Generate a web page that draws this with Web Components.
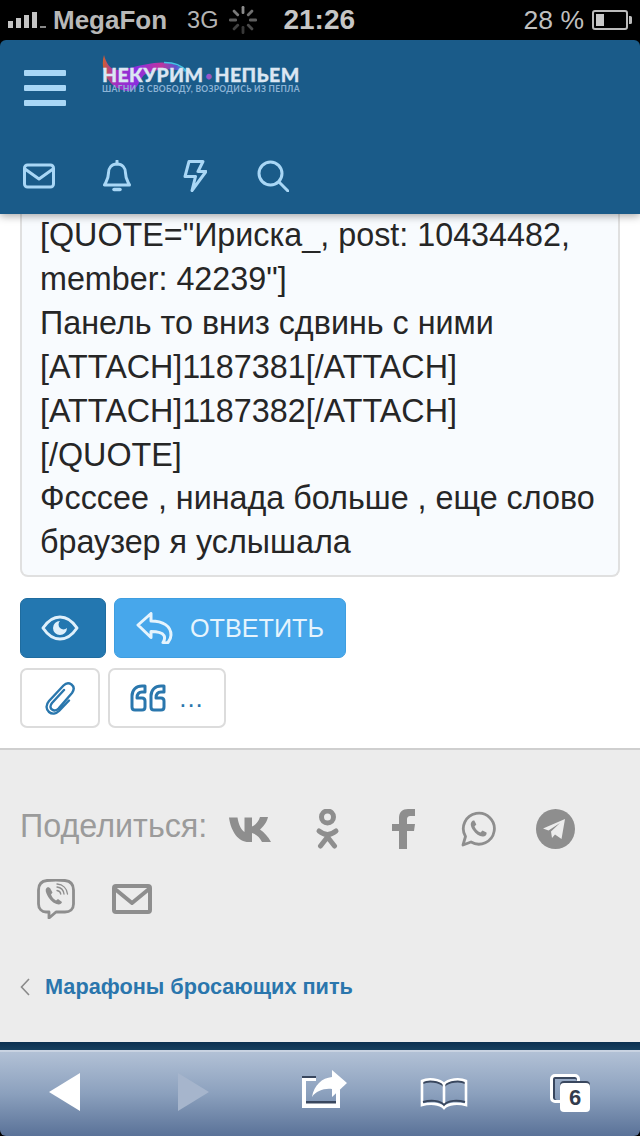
<!DOCTYPE html>
<html lang="ru">
<head>
<meta charset="utf-8">
<title>Некурим</title>
<style>
html, body { margin: 0; padding: 0; background: #000; }
body { width: 640px; height: 1136px; overflow: hidden; font-family: "Liberation Sans", Arial, sans-serif; display: flex; flex-direction: column; }
</style>
</head>
<body>
<ios-status></ios-status>
<site-header></site-header>
<post-area>
    <quote-box>[QUOTE="Ириска_, post: 10434482,<br>member: 42239"]<br>Панель то вниз сдвинь с ними<br>[ATTACH]1187381[/ATTACH]<br>[ATTACH]1187382[/ATTACH]<br>[/QUOTE]<br>Фсссее , нинада больше , еще слово<br>браузер я услышала</quote-box>
    <post-actions></post-actions>
</post-area>
<page-footer>
    <share-row></share-row>
    <back-link>Марафоны бросающих пить</back-link>
</page-footer>
<safari-bar></safari-bar>

<script>
// status bar
customElements.define('ios-status', class extends HTMLElement{
    connectedCallback(){
        this.attachShadow({mode: 'open'});
        let spokes = '';
        for(let i = 0; i < 8; i++){
            let o = [.75, .6, .5, .4, .3, .35, .5, .65][i];
            spokes += `<rect x="12.6" y="0" width="2.8" height="8" rx="1.2" fill="#bbb" opacity="${o}" transform="rotate(${i * 45} 14 14)"/>`;
        }
        this.shadowRoot.innerHTML = `
        <style>
        :host { display: flex; flex: none; height: 40px; background: #000; color: #c9c9c9; align-items: center; font-family: "Liberation Sans", Arial, sans-serif; }
        svg { flex: none; display: block; }
        .signal { margin-left: 8px; }
        .carrier { margin-left: 7px; font-size: 26px; font-weight: 700; color: #b8b8b8; }
        .net { margin-left: 20px; font-size: 23.5px; color: #b4b4b4; }
        .spin { margin-left: 11px; }
        .time { margin-left: 26px; font-size: 28px; font-weight: 700; color: #c6c6c6; }
        .pct { margin-left: auto; font-size: 26.500px; color: #bfbfbf; }
        .batt { margin: 0 8px 0 8px; }
        </style>
        <svg class="signal" width="38" height="16" viewBox="0 0 38 16">
            <rect x="0" y="9" width="5" height="7" fill="#c4c4c4"/>
            <rect x="8" y="6" width="5" height="10" fill="#c4c4c4"/>
            <rect x="16" y="3" width="5" height="13" fill="#c4c4c4"/>
            <rect x="24" y="0" width="5" height="16" fill="#c4c4c4"/>
            <rect x="32" y="14" width="6" height="2" fill="#888"/>
        </svg>
        <span class="carrier">MegaFon</span>
        <span class="net">3G</span>
        <svg class="spin" width="28" height="28" viewBox="0 0 28 28">${spokes}</svg>
        <span class="time">21:26</span>
        <span class="pct">28 %</span>
        <svg class="batt" width="40" height="20" viewBox="0 0 40 20">
            <rect x="1" y="1" width="34" height="18" rx="2" fill="none" stroke="#bbb" stroke-width="2"/>
            <rect x="4" y="4" width="8" height="12" fill="#c8c8c8"/>
            <path d="M37 6h1.5a1.5 1.5 0 0 1 1.5 1.5v5a1.5 1.5 0 0 1-1.5 1.5H37z" fill="#bbb"/>
        </svg>`;
    }
});

customElements.define('site-header', class extends HTMLElement{
    connectedCallback(){
        this.attachShadow({mode: 'open'});
        this.shadowRoot.innerHTML = `
        <style>
        :host { display: block; flex: none; height: 174px; box-sizing: border-box; background: #1a5b89; border-radius: 6px 6px 0 0; box-shadow: 0 2px 8px rgba(0,0,0,.35); position: relative; z-index: 2; }
        .top { display: flex; height: 120px; align-items: flex-start; }
        .burger { margin: 30px 0 0 24px; width: 42px; display: flex; flex-direction: column; gap: 9px; }
        .burger i { display: block; height: 6px; background: #a9d7f6; border-radius: 1px; }
        .logo { position: relative; margin: 15px 0 0 36px; width: 200px; height: 40px; }
        .logo svg { position: absolute; left: 0; top: 0; }
        .name { position: absolute; left: 0; top: 12px; white-space: nowrap; font: 900 19.5px Lato, "Liberation Sans", sans-serif; letter-spacing: .4px; color: #dbe6f2; line-height: 16px; -webkit-text-stroke: .3px #dbe6f2; }
        .name b { color: #9a55c8; font-size: 11px; margin: 0 2px; vertical-align: 2px; -webkit-text-stroke: 0; }
        .sub { position: absolute; left: 0; top: 30px; white-space: nowrap; font: 700 8.5px Lato, "Liberation Sans", sans-serif; letter-spacing: .31px; color: #8db4d6; line-height: 9px; }
        .icons { display: flex; align-items: center; height: 32px; }
        .icons svg { display: block; flex: none; fill: none; stroke: #a9d7f6; stroke-width: 3; stroke-linejoin: round; stroke-linecap: round; }
        </style>
        <div class="top">
            <div class="burger"><i></i><i></i><i></i></div>
            <div class="logo">
                <svg width="200" height="40" viewBox="0 0 200 40">
                    <defs>
                        <linearGradient id="sw" x1="0" x2="1" y1="0" y2="0">
                            <stop offset="0" stop-color="#d0602c"/>
                            <stop offset=".14" stop-color="#a52fc0"/>
                            <stop offset=".4" stop-color="#8a2fe0"/>
                            <stop offset=".7" stop-color="#c0359f"/>
                            <stop offset=".88" stop-color="#5a55d0"/>
                            <stop offset="1" stop-color="#3fb6d8"/>
                        </linearGradient>
                    </defs>
                    <path d="M2 0C-1 10 2 20 8 27c6 7 16 11 23 8 5-3 6-9 11-15 10-6 26-8 42-3-6-8-18-11-32-9-16 2-28 7-38 7C8 14 4 8 2 0z" fill="url(#sw)"/>
                    <path d="M62 7.500c10 0 18 3 22 8.500" fill="none" stroke="#42c4e4" stroke-width="1.500"/>
                </svg>
                <span class="name">НЕКУРИМ<b>●</b>НЕПЬЕМ</span>
                <span class="sub">ШАГНИ В СВОБОДУ, ВОЗРОДИСЬ ИЗ ПЕПЛА</span>
            </div>
        </div>
        <div class="icons">
            <svg style="margin-left:23px" width="32" height="32" viewBox="0 0 32 32"><rect x="1.5" y="5" width="29" height="22" rx="3"/><path d="M2 9l14 10 14-10"/></svg>
            <svg style="margin-left:48px" width="28" height="32" viewBox="0 0 28 32"><path d="M14 4c-5.500 0-8.500 4-8.500 9 0 6-2 8-4 12h25c-2-4-4-6-4-12 0-5-3-9-8.500-9z"/><path d="M14 1v3" /><path d="M11 29.500h6" stroke-width="3.500"/></svg>
            <svg style="margin-left:52px" width="24" height="32" viewBox="0 0 24 32"><path d="M6 1.500h14l-5 10h8L9 30.500l3.500-14H2z"/></svg>
            <svg style="margin-left:50px" width="32" height="32" viewBox="0 0 32 32"><circle cx="13.500" cy="13.500" r="11.500"/><path d="M22 22l9 9"/></svg>
        </div>`;
    }
});

customElements.define('post-area', class extends HTMLElement{
    connectedCallback(){
        this.attachShadow({mode: 'open'});
        this.shadowRoot.innerHTML = `
        <style>
        :host { display: block; flex: none; height: 536px; box-sizing: border-box; background: #fff; border-bottom: 2px solid #cfcfcf; padding: 0 20px; }
        </style>
        <slot></slot>`;
    }
});

customElements.define('quote-box', class extends HTMLElement{
    connectedCallback(){
        this.attachShadow({mode: 'open'});
        this.shadowRoot.innerHTML = `
        <style>
        :host { display: block; box-sizing: border-box; height: 363px; background: #f8fbfe; border: 2px solid #e0e0e0; border-top: 0; border-radius: 0 0 8px 8px; padding: 0 18px; font: 32.300px/43.900px "Liberation Sans", Arial, sans-serif; color: #262626; white-space: nowrap; }
        </style>
        <slot></slot>`;
    }
});

customElements.define('post-actions', class extends HTMLElement{
    connectedCallback(){
        this.attachShadow({mode: 'open'});
        this.shadowRoot.innerHTML = `
        <style>
        :host { display: flex; flex-direction: column; gap: 10px; padding-top: 21px; }
        .row { display: flex; gap: 8px; }
        .btn { box-sizing: border-box; height: 60px; border-radius: 7px; display: flex; align-items: center; justify-content: center; font-family: "Liberation Sans", Arial, sans-serif; }
        svg { display: block; flex: none; fill: none; stroke-linecap: round; stroke-linejoin: round; }
        .eye { width: 86px; background: #2377b0; border: 1px solid #1f6c9f; }
        .eye svg { margin-right: 6px; }
        .reply { width: 232px; background: #47a7eb; border: 1px solid #3f9ee0; color: #e6f4fd; font-size: 25.200px; gap: 17px; }
        .plain { background: #fff; border: 2px solid #dcdcdc; color: #2a77ad; }
        .clip { width: 80px; }
        .quote { width: 118px; gap: 13px; font-size: 26px; }
        .dots { letter-spacing: 1px; }
        </style>
        <div class="row">
            <div class="btn eye">
                <svg width="38" height="26" viewBox="0 0 38 26">
                    <path d="M2 13C7 5.500 13 2 19 2s12 3.500 17 11c-5 7.500-11 11-17 11S7 20.500 2 13z" stroke="#dff0fb" stroke-width="3"/>
                    <path d="M19 6a7 7 0 1 0 7 7 4.200 4.200 0 0 1-7-7z" fill="#dff0fb"/>
                </svg>
            </div>
            <div class="btn reply">
                <svg width="37" height="32" viewBox="0 0 37 32" stroke="#e6f4fd" stroke-width="3">
                    <path d="M2 13L15 1.500v7.500c12 0 20 5 20 14 0 3-1 5-3 7.500-2 .5-4 .5-5 0 2-3 2-5 1-7-2-3-6-4-13-4v6z"/>
                </svg>
                <span>ОТВЕТИТЬ</span>
            </div>
        </div>
        <div class="row">
            <div class="btn plain clip">
                <svg width="30" height="34" viewBox="0 0 30 34" stroke="#2a77ad" stroke-width="2.400">
                    <path d="M19 9L7 22c-2.500 3-1.500 5.500 0 6.500 2 1.500 4.500 1 6.500-1L27 12c2.500-3.500 2-6.500-.5-8.500-3-2-5.500-1.500-8 1L4 20c-3.500 4-3 8.500 0 11 3 2.500 7 2 10-1l10-10.500"/>
                </svg>
            </div>
            <div class="btn plain quote">
                <svg width="36" height="28" viewBox="0 0 36 28" stroke="#2a77ad" stroke-width="3">
                    <path d="M15 2h-3C6 2 2 6 2 12v11c0 2 1 3 3 3h7c2 0 3-1 3-3v-6c0-2-1-3-3-3H7c0-4 2-6 5-6h3z"/>
                    <path d="M34 2h-3c-6 0-10 4-10 10v11c0 2 1 3 3 3h7c2 0 3-1 3-3v-6c0-2-1-3-3-3h-5c0-4 2-6 5-6h3z"/>
                </svg>
                <span class="dots">...</span>
            </div>
        </div>`;
    }
});

customElements.define('page-footer', class extends HTMLElement{
    connectedCallback(){
        this.attachShadow({mode: 'open'});
        this.shadowRoot.innerHTML = `
        <style>
        :host { display: flex; flex-direction: column; flex: none; height: 292px; box-sizing: border-box; background: #ececec; padding-top: 59px; }
        </style>
        <slot></slot>`;
    }
});

customElements.define('share-row', class extends HTMLElement{
    connectedCallback(){
        this.attachShadow({mode: 'open'});
        this.shadowRoot.innerHTML = `
        <style>
        :host { display: block; height: 119px; }
        .line { display: flex; align-items: center; height: 40px; }
        .line + .line { margin-top: 30px; }
        .label { margin-left: 20px; font: 32.300px "Liberation Sans", Arial, sans-serif; color: #9b9b9b; width: 209px; flex: none; position: relative; top: -3px; white-space: nowrap; }
        svg { display: block; flex: none; }
        </style>
        <div class="line">
            <span class="label">Поделиться:</span>
            <svg width="43" height="26" viewBox="0 0 43 26" fill="#8e8e8e"><path d="M0 1.500h8.500c1 7 3.500 12 7 14.500V1.500h7.500v9c3-1 6.500-4.500 8-9.500h8c-1.500 6-5 10-8 12.500 4 2.500 8 7 11 12.500h-9c-2-4.500-6-8-10-9v9h-3.500C9.500 26 2 16 0 1.500z"/></svg>
            <svg style="margin-left:43px" width="25" height="40" viewBox="0 0 25 40" fill="none" stroke="#8e8e8e" stroke-width="5" stroke-linecap="round"><circle cx="12.500" cy="8" r="6"/><path d="M4 22Q12.500 29 21 22"/><path d="M12.500 28L5.500 37M12.500 28L19.500 37"/></svg>
            <svg style="margin-left:52px" width="23" height="40" viewBox="0 0 23 40" fill="#8e8e8e"><path d="M7 40V22H0v-7h7V9c0-6 3.500-9 9-9h7v7h-4c-3 0-4 1-4 4v4h8l-1 7h-7v18z"/></svg>
            <svg style="margin-left:46px" width="36" height="36" viewBox="0 0 36 36" fill="none" stroke="#8e8e8e" stroke-width="2.800" stroke-linejoin="round"><path d="M2 34l2.500-8.500A15.500 15.500 0 1 1 10 31z"/><path d="M12 9.500c-3 2-3 5 0 9.500s7 7 10.500 6.500c2.500-.5 3.500-2.500 3-4l-4-2-2 2c-3-1-5-3.500-6-6l1.800-2-2-4z" fill="#8e8e8e" stroke="none"/></svg>
            <svg style="margin-left:39px" width="39" height="40" viewBox="0 0 39 40"><ellipse cx="19.500" cy="20" rx="19.500" ry="20" fill="#8e8e8e"/><path d="M7 19.500l22-9.500-3.500 20-6.500-4.500-3 3.500-1-6.500 9-8.500-11.500 7.500z" fill="#ececec"/></svg>
        </div>
        <div class="line">
            <svg style="margin-left:37px" width="38" height="40" viewBox="0 0 38 40" fill="none" stroke="#8e8e8e" stroke-linecap="round" stroke-linejoin="round"><path d="M12 33H9c-4 0-7.500-3-7.500-8V11C1.500 5 5 2 10 1.500c6-.5 12-.5 18 0 5 .5 8.500 3.500 8.500 9.500v14c0 5-3.500 8-8.500 8H19l-7 6z" stroke-width="2.800"/><path d="M11 8c-2.500 1-3 3-1.500 6.500 2 5 5.500 9 10 10.500 3 1 5 0 5.500-2l-4-3-2 1.500c-2.500-1.500-4-3.500-5-6l1.500-2-2.500-4.500z" fill="#8e8e8e" stroke="none"/><path d="M20 8c4 .5 6.500 3 7 7M20 11.500c2 .3 3.500 1.500 3.800 3.700M20 5c6 .5 10 4.500 10.500 10" stroke-width="1.300"/></svg>
            <svg style="margin-left:37px" width="40" height="30" viewBox="0 0 40 30" fill="none" stroke="#8e8e8e" stroke-width="4" stroke-linejoin="round"><rect x="2" y="2" width="36" height="26" rx="2"/><path d="M3 5l17 14L37 5"/></svg>
        </div>`;
    }
});

customElements.define('back-link', class extends HTMLElement{
    connectedCallback(){
        this.attachShadow({mode: 'open'});
        this.shadowRoot.innerHTML = `
        <style>
        :host { display: flex; align-items: center; margin-top: 45px; padding-left: 20px; height: 28px; font: 700 21.700px "Liberation Sans", Arial, sans-serif; color: #2a76ad; white-space: nowrap; }
        svg { display: block; flex: none; margin-right: 15px; }
        </style>
        <svg width="10" height="18" viewBox="0 0 10 18" fill="none" stroke="#8a8a8a" stroke-width="1.600"><path d="M9 1L1.500 9 9 17"/></svg>
        <slot></slot>`;
    }
});

customElements.define('safari-bar', class extends HTMLElement{
    connectedCallback(){
        this.attachShadow({mode: 'open'});
        this.shadowRoot.innerHTML = `
        <style>
        :host { display: block; flex: none; height: 94px; background: #000; }
        .band { height: 8px; background: linear-gradient(#0c3050, #17405f); }
        .bar { height: 86px; box-sizing: border-box; border-top: 2px solid #c9d3e2; border-radius: 0 0 6px 6px; background: linear-gradient(#b2c1d6, #8ba0bd 50%, #5a7298); display: flex; align-items: flex-start; padding-top: 21px; }
        svg { display: block; flex: none; }
        .tabs { position: relative; width: 40px; height: 38px; margin-left: 82px; margin-top: 1px; }
        .tabs i { position: absolute; left: 0; top: 0; width: 30px; height: 29px; box-sizing: border-box; border: 3px solid #fff; border-radius: 5px; box-shadow: inset 0 2px #39475e, inset 2px 0 #39475e; }
        .tabs b { position: absolute; right: 0; bottom: 0; width: 30px; height: 29px; border-radius: 4px; background: #fff; box-shadow: 0 -2px #39475e; color: #333c4d; font: 700 22px/29px "Liberation Sans", Arial, sans-serif; text-align: center; }
        </style>
        <div class="band"></div>
        <div class="bar">
            <svg style="margin-left:49px" width="31" height="38" viewBox="0 0 31 38"><path d="M31 0v38L0 19z" fill="#fff"/></svg>
            <svg style="margin-left:98px" width="31" height="38" viewBox="0 0 31 38"><path d="M0 0v38l31-19z" fill="#a6b5cc"/></svg>
            <svg style="margin-left:93px;margin-top:-3px" width="46" height="40" viewBox="0 0 46 40">
                <path d="M0 6h14v2H0z" fill="#39475e"/>
                <path d="M0 8h14v3H4v20h30V22l4-3v19H0z" fill="#fff"/>
                <path d="M4 31h30v2.500H4z" fill="#39475e"/>
                <path d="M30 0l15 13-15 14v-8c-8-1-16 2-20 8 2-12 10-19 20-20z" fill="#fff"/>
            </svg>
            <svg style="margin-left:72px;margin-top:4px" width="48" height="34" viewBox="0 0 48 34" fill="none" stroke-width="2.600">
                <path d="M24 9C20 4 8 3 2 6M24 9c4-5 16-6 22-3" stroke="#39475e"/>
                <path d="M24 7C20 2 8 1 2 4v24c7-2 18-2 22 3 4-5 15-5 22-3V4c-6-3-18-2-22 3z" stroke="#fff"/>
                <path d="M24 7v24" stroke="#fff"/>
                <path d="M3 25c7-2 17-2 21 3 4-5 14-5 21-3" stroke="#39475e" stroke-width="2"/>
            </svg>
            <div class="tabs"><i></i><b>6</b></div>
        </div>`;
    }
});
</script>
</body>
</html>
